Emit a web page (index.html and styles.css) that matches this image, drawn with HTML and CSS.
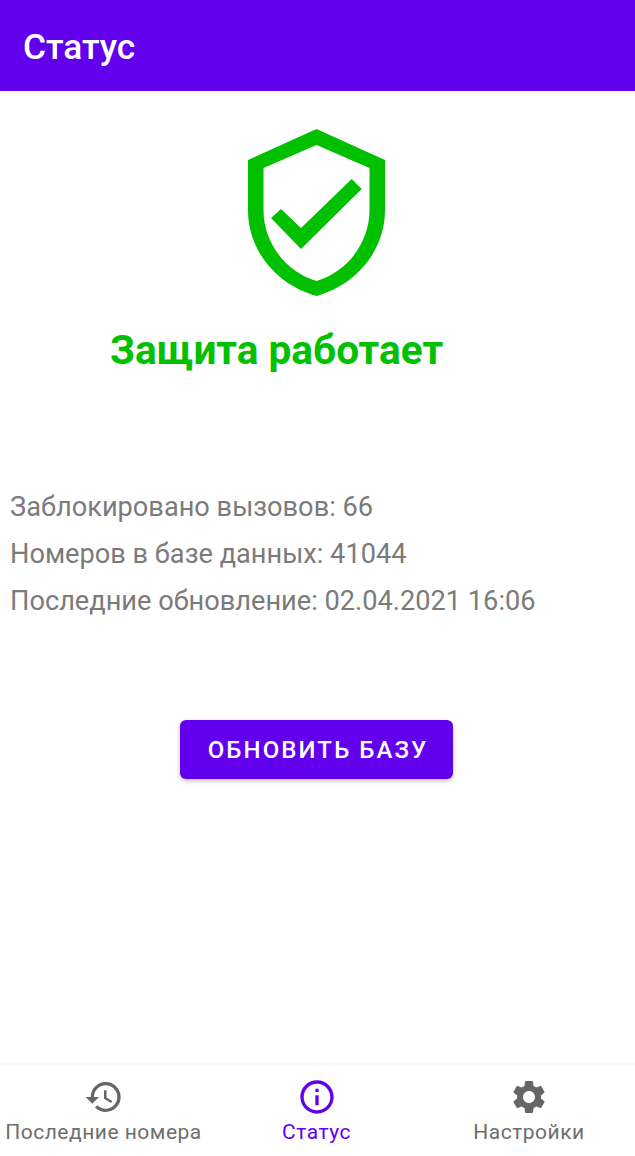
FILE: index.html
```html
<!DOCTYPE html>
<html lang="ru">
<head>
    <meta charset="UTF-8">
    <meta name="viewport" content="width=device-width, initial-scale=1.0">
    <title>Статус</title>
    <link rel="stylesheet" href="styles.css">
</head>
<body>
    <header class="app-bar">Статус</header>
    <main class="content">
        <svg class="shield" viewBox="0 0 137 167" width="137" height="167">
            <path fill="#00c000" fill-rule="evenodd" d="M68.5 0 137 31V81C137 122 108 156 68.5 167 29 156 0 122 0 81V31ZM68.5 16 15.500 39V81C15.500 114 38 143 68.5 152 99 143 121.500 114 121.500 81V39Z"/>
            <path fill="#00c000" d="M23 89 33 80 53 99 103.700 50 113.700 60 53 120Z"/>
        </svg>
        <h1 class="status-title">Защита работает</h1>
        <div class="stats">
            <p>Заблокировано вызовов: 66</p>
            <p>Номеров в базе данных: 41044</p>
            <p>Последние обновление: 02.04.2021 16:06</p>
        </div>
        <button class="update-btn">ОБНОВИТЬ БАЗУ</button>
    </main>
    <nav class="bottom-nav">
        <div class="nav-item recent">
            <svg viewBox="0 0 24 24" width="40" height="40"><path fill="#666" d="M13 3a9 9 0 0 0-9 9H1l3.890 3.890.070.140L9 12H6c0-3.870 3.130-7 7-7s7 3.130 7 7-3.130 7-7 7c-1.930 0-3.680-.790-4.940-2.060l-1.420 1.420A8.954 8.954 0 0 0 13 21a9 9 0 0 0 0-18zm-1 5v5l4.280 2.540.720-1.210-3.500-2.080V8H12z"/></svg>
            <span>Последние номера</span>
        </div>
        <div class="nav-item active">
            <svg viewBox="0 0 24 24" width="40" height="40"><path fill="#6200ee" d="M11 7h2v2h-2zm0 4h2v6h-2zm1-9C6.480 2 2 6.480 2 12s4.480 10 10 10 10-4.480 10-10S17.520 2 12 2zm0 18c-4.410 0-8-3.590-8-8s3.590-8 8-8 8 3.590 8 8-3.590 8-8 8z"/></svg>
            <span>Статус</span>
        </div>
        <div class="nav-item settings">
            <svg viewBox="0 0 24 24" width="40" height="40"><path fill="#666" d="M19.140 12.940c.040-.300.060-.610.060-.940 0-.320-.020-.640-.070-.940l2.030-1.580a.49.490 0 0 0 .120-.610l-1.920-3.320a.488.488 0 0 0-.590-.220l-2.390.960c-.500-.380-1.030-.700-1.620-.940l-.360-2.540a.484.484 0 0 0-.480-.410h-3.840c-.240 0-.430.170-.470.410l-.360 2.540c-.590.240-1.130.570-1.620.940l-2.390-.960c-.220-.080-.470 0-.590.220L2.740 8.870c-.120.210-.080.470.120.610l2.030 1.580c-.050.300-.090.630-.090.940s.020.640.070.940l-2.030 1.580a.49.490 0 0 0-.120.610l1.920 3.320c.120.220.370.290.590.220l2.390-.960c.500.380 1.030.700 1.620.940l.360 2.540c.050.240.240.410.480.410h3.840c.240 0 .440-.170.470-.410l.360-2.540c.590-.240 1.130-.560 1.620-.940l2.390.960c.220.080.470 0 .590-.220l1.920-3.320c.120-.220.070-.470-.120-.610l-2.010-1.580zM12 15.600c-1.980 0-3.600-1.620-3.600-3.600s1.620-3.600 3.600-3.600 3.600 1.620 3.600 3.600-1.620 3.600-3.600 3.600z"/></svg>
            <span>Настройки</span>
        </div>
    </nav>
</body>
</html>
```

FILE: styles.css
```css
body {
    font-family: Roboto, "Liberation Sans", sans-serif;
    margin: 0;
    padding: 0;
    height: 100vh;
    display: flex;
    flex-direction: column;
    background-color: #fff;
    overflow: hidden;
}
.app-bar {
    height: 91px;
    flex-shrink: 0;
    box-sizing: border-box;
    padding: 3px 23px 0;
    display: flex;
    align-items: center;
    background-color: #6200ee;
    color: #fff;
    font-size: 35.3px;
    font-weight: 500;
}
.content {
    flex-grow: 1;
    display: flex;
    flex-direction: column;
}
.shield {
    display: block;
    margin: 38px 0 0 248px;
}
.status-title {
    margin: 29px 0 0 110px;
    font-size: 40.6px;
    line-height: 50px;
    font-weight: 700;
    color: #00c000;
}
.stats {
    margin: 109px 0 0 10px;
    color: #7b7b7b;
    font-size: 27.2px;
}
.stats p {
    margin: 0;
    height: 47px;
    line-height: 47px;
}
.update-btn {
    align-self: flex-start;
    margin: 95px 0 0 180px;
    padding: 0 0 0 3px;
    width: 273px;
    height: 59px;
    border: none;
    border-radius: 6px;
    background-color: #6200ee;
    color: #fff;
    font-family: inherit;
    font-size: 24px;
    font-weight: 500;
    letter-spacing: 2.1px;
    box-shadow: 0 2px 4px rgba(0, 0, 0, 0.25);
}
.bottom-nav {
    height: 93px;
    flex-shrink: 0;
    display: flex;
    background-color: #fff;
    border-top: 2px solid #fafafa;
    box-sizing: border-box;
    color: #6e6e6e;
    font-size: 21px;
}
.nav-item {
    display: flex;
    flex-direction: column;
    align-items: center;
    padding-top: 12px;
    white-space: nowrap;
}
.nav-item.recent {
    width: 207px;
}
.nav-item.active {
    width: 219px;
    color: #6200ee;
}
.nav-item.settings {
    width: 206px;
}
.nav-item span {
    margin-top: 1px;
    line-height: 28px;
    letter-spacing: 0.5px;
}
```
